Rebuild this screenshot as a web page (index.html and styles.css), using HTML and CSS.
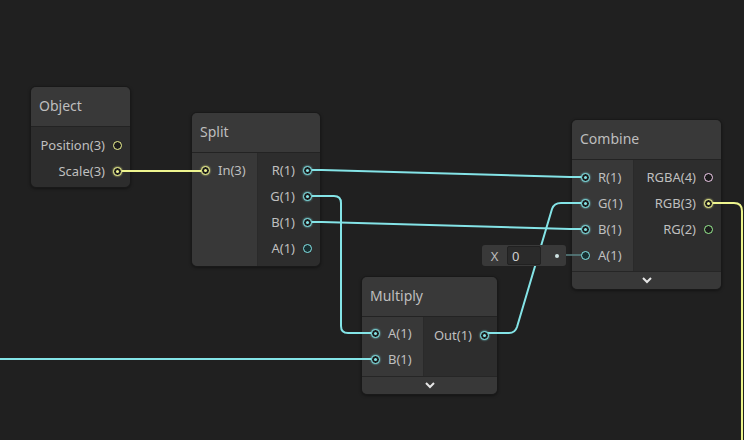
FILE: index.html
```html
<!DOCTYPE html>
<html lang="en">
<head>
    <meta charset="UTF-8">
    <title>Shader Graph</title>
    <link rel="stylesheet" href="styles.css">
</head>
<body>
    <div class="graph">
        <svg class="edges" width="744" height="440" viewBox="0 0 744 440">
            <path class="edge yellow" d="M118,171 H204" />
            <path class="edge cyan" d="M308,170 H322 L570,177 H585" />
            <path class="edge cyan" d="M308,196 H334 Q341,196 341,203 V326 Q341,333 348,333 H375" />
            <path class="edge cyan" d="M308,222 H322 L570,229 H585" />
            <path class="edge cyan" d="M486,333 H509 Q515,333 517,327 L552,209 Q554,203 561,203 H585" />
            <path class="edge cyan" d="M0,359 H375" />
            <path class="edge yellow" d="M709,203 H734 Q742,203 742,211 V440" />
            <path class="edge dim" d="M555,255 H585" />
        </svg>

        <div class="node node-object">
            <div class="node-title">Object</div>
            <div class="node-body">
                <div class="outputs">
                    <div class="row out">Position(3) <span class="port yellow"></span></div>
                    <div class="row out">Scale(3) <span class="port yellow linked"></span></div>
                </div>
            </div>
        </div>

        <div class="node node-split">
            <div class="node-title">Split</div>
            <div class="node-body">
                <div class="inputs">
                    <div class="row in"><span class="port yellow linked"></span> In(3)</div>
                </div>
                <div class="outputs">
                    <div class="row out">R(1) <span class="port cyan linked"></span></div>
                    <div class="row out">G(1) <span class="port cyan linked"></span></div>
                    <div class="row out">B(1) <span class="port cyan linked"></span></div>
                    <div class="row out">A(1) <span class="port cyan"></span></div>
                </div>
            </div>
        </div>

        <div class="node node-combine">
            <div class="node-title">Combine</div>
            <div class="node-body">
                <div class="inputs">
                    <div class="row in"><span class="port cyan linked"></span> R(1)</div>
                    <div class="row in"><span class="port cyan linked"></span> G(1)</div>
                    <div class="row in"><span class="port cyan linked"></span> B(1)</div>
                    <div class="row in"><span class="port cyan"></span> A(1)</div>
                </div>
                <div class="outputs">
                    <div class="row out">RGBA(4) <span class="port pink"></span></div>
                    <div class="row out">RGB(3) <span class="port yellow linked"></span></div>
                    <div class="row out">RG(2) <span class="port green"></span></div>
                </div>
            </div>
            <div class="node-footer">
                <svg width="10" height="7" viewBox="0 0 10 7"><path d="M1,1 L5,5 L9,1" /></svg>
            </div>
        </div>

        <div class="node node-multiply">
            <div class="node-title">Multiply</div>
            <div class="node-body">
                <div class="inputs">
                    <div class="row in"><span class="port cyan linked"></span> A(1)</div>
                    <div class="row in"><span class="port cyan linked"></span> B(1)</div>
                </div>
                <div class="outputs">
                    <div class="row out">Out(1) <span class="port cyan linked"></span></div>
                </div>
            </div>
            <div class="node-footer">
                <svg width="10" height="7" viewBox="0 0 10 7"><path d="M1,1 L5,5 L9,1" /></svg>
            </div>
        </div>

        <div class="field">
            <span class="field-label">X</span>
            <span class="field-input">0</span>
            <span class="field-dot"></span>
        </div>
    </div>
</body>
</html>
```

FILE: styles.css
```css
body {
    margin: 0;
    background-color: #202020;
    font-family: 'Noto Sans', 'Open Sans', sans-serif;
    color: #bfbfbf;
    overflow: hidden;
}

.graph {
    position: relative;
    width: 744px;
    height: 440px;
    background-color: #202020;
    overflow: hidden;
}

.edges {
    position: absolute;
    left: 0;
    top: 0;
    z-index: 2;
    pointer-events: none;
}

.edge {
    fill: none;
    stroke-width: 2;
}

.edge.cyan {
    stroke: #84e4e7;
}

.edge.yellow {
    stroke: #eef58f;
}

.edge.dim {
    stroke: #5a8384;
    stroke-width: 1.5;
}

/* nodes sit on a free canvas, their place is the content */
.node {
    position: absolute;
    display: flex;
    flex-direction: column;
    background-color: #2d2d2d;
    border: 1px solid #191919;
    border-radius: 6px;
    box-shadow: 0 1px 3px rgba(0, 0, 0, 0.4);
    overflow: hidden;
}

.node-object {
    left: 30px;
    top: 86px;
    width: 99px;
}

.node-split {
    left: 191px;
    top: 112px;
    width: 128px;
}

.node-combine {
    left: 571px;
    top: 119px;
    width: 149px;
}

.node-multiply {
    left: 361px;
    top: 276px;
    width: 135px;
}

.node-title {
    height: 37px;
    display: flex;
    align-items: center;
    padding: 0 0 2px 8px;
    font-size: 14px;
    color: #bebebe;
    background-color: #393939;
    border-bottom: 1px solid #232323;
}

.node-combine .node-title {
    height: 36px;
    padding-bottom: 3px;
}

.node-body {
    display: flex;
}

.inputs {
    display: flex;
    flex-direction: column;
    padding: 4px 0 5px;
    background-color: #383838;
    border-right: 1px solid #2a2a2a;
}

.node-split .inputs {
    width: 65px;
}

.node-combine .inputs,
.node-multiply .inputs {
    width: 61px;
}

.node-combine .inputs {
    padding-bottom: 3px;
}

.node-multiply .inputs {
    padding: 3px 0 4px;
}

.outputs {
    flex: 1;
    display: flex;
    flex-direction: column;
    padding: 4px 0 3px;
}

.node-object .outputs {
    padding: 5px 0 3px;
}

.node-split .outputs {
    padding-bottom: 5px;
}

.node-multiply .outputs {
    padding-top: 5px;
}

.row {
    height: 26px;
    display: flex;
    align-items: center;
    gap: 8px;
    font-size: 13px;
    white-space: nowrap;
}

.row.in {
    padding-left: 9px;
}

.row.out {
    justify-content: flex-end;
    padding-right: 8px;
}

.port {
    position: relative;
    z-index: 3;
    width: 7px;
    height: 7px;
    border: 1px solid;
    border-radius: 50%;
    background-color: #1c1c1c;
    flex-shrink: 0;
}

.port.linked::after {
    content: '';
    position: absolute;
    left: 2px;
    top: 2px;
    width: 3px;
    height: 3px;
    border-radius: 50%;
    background-color: currentColor;
}

.port.cyan {
    color: #84e4e7;
}

.port.cyan:not(.linked) {
    background-color: #183032;
}

.port.yellow {
    color: #f0f592;
}

.port.pink {
    color: #f3cdee;
}

.port.green {
    color: #9aef92;
}

.port.linked {
    box-shadow: 0 0 2px currentColor;
}

.node-footer {
    height: 17px;
    display: flex;
    justify-content: center;
    align-items: center;
    background-color: #383838;
    border-top: 1px solid #262626;
}

.node-footer svg path {
    fill: none;
    stroke: #e6e6e6;
    stroke-width: 2;
}

.field {
    position: absolute;
    left: 482px;
    top: 245px;
    z-index: 4;
    width: 84px;
    height: 21px;
    display: flex;
    align-items: center;
    background-color: #393939;
    border-radius: 3px;
    font-size: 13px;
}

.field-label {
    width: 25px;
    text-align: center;
    color: #bdbdbd;
}

.field-input {
    width: 28px;
    height: 17px;
    padding-left: 4px;
    display: flex;
    align-items: center;
    background-color: #2a2a2a;
    border: 1px solid #212121;
    border-radius: 2px;
    color: #d0d0d0;
}

.field-dot {
    width: 4px;
    height: 4px;
    margin-left: 14px;
    border-radius: 50%;
    background-color: #cfe3e3;
}
```
